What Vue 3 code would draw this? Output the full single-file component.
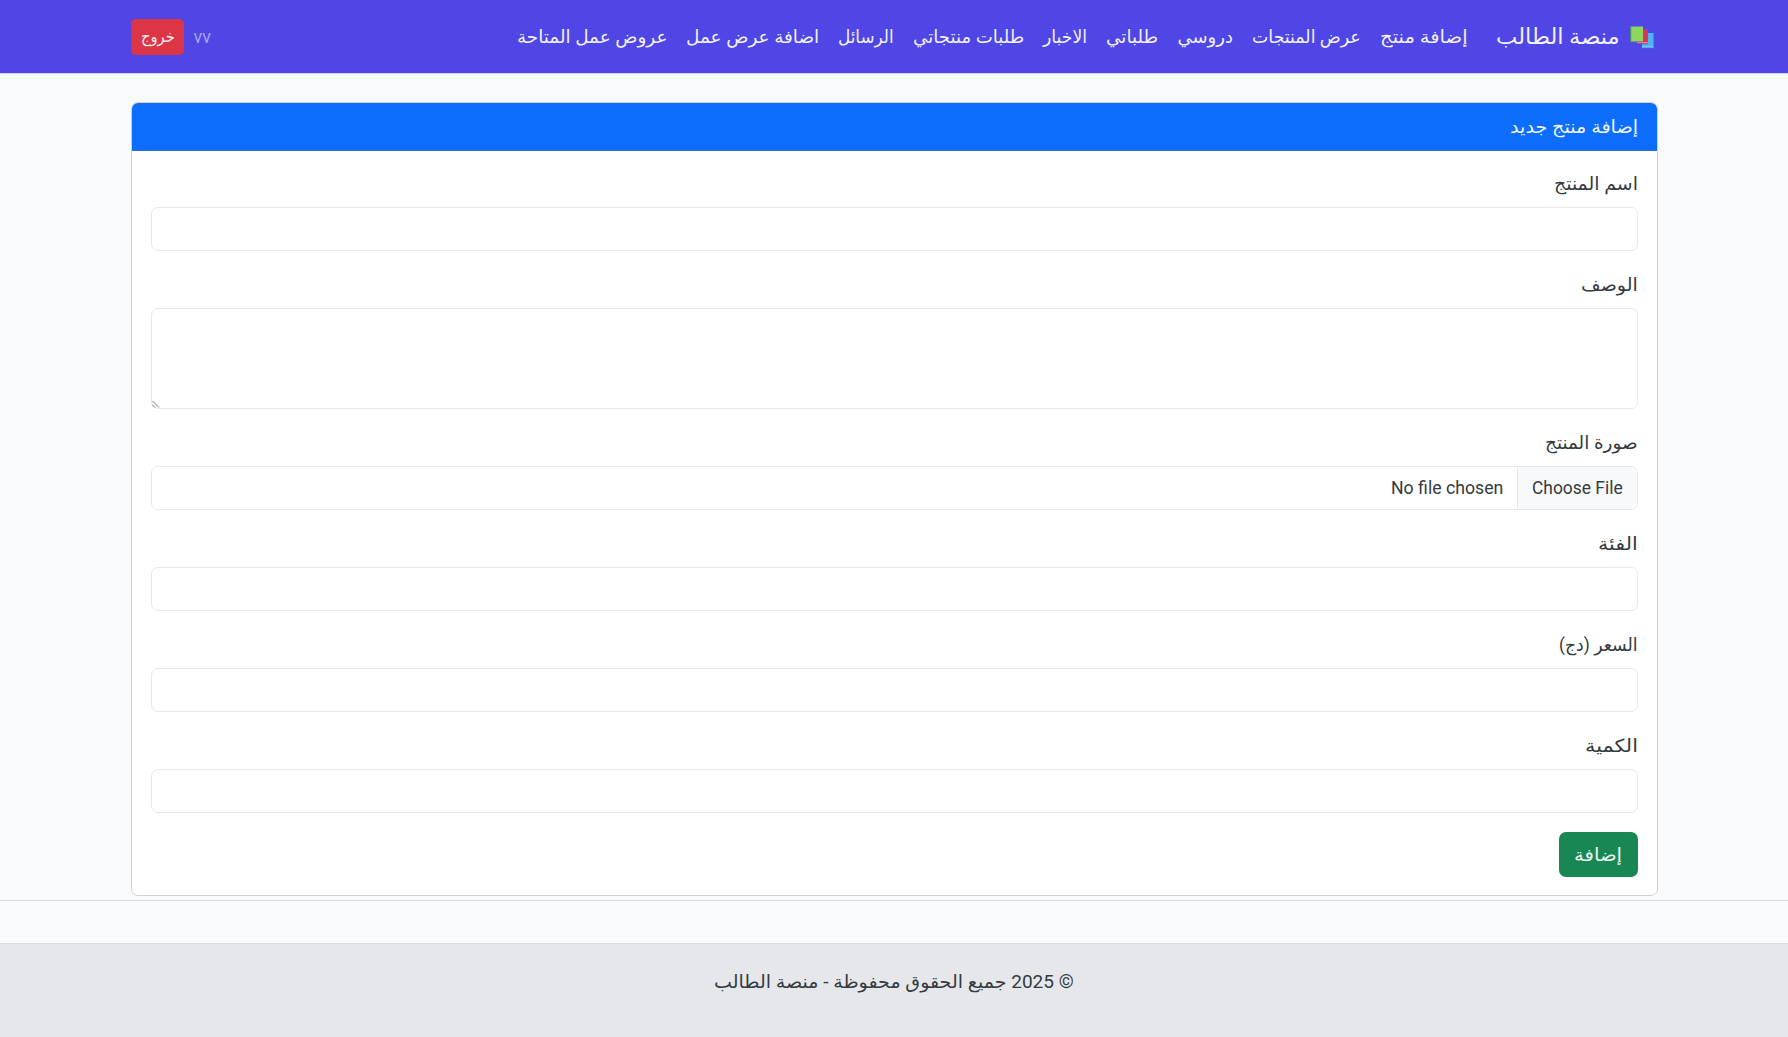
<script setup>
const links = [
  { text: 'إضافة منتج', w: 88 },
  { text: 'عرض المنتجات', w: 109 },
  { text: 'دروسي', w: 56 },
  { text: 'طلباتي', w: 52 },
  { text: 'الاخبار', w: 44 },
  { text: 'طلبات منتجاتي', w: 111 },
  { text: 'الرسائل', w: 56 },
  { text: 'اضافة عرض عمل', w: 133 },
  { text: 'عروض عمل المتاحة', w: 150 },
]

const fields = [
  { label: 'اسم المنتج', w: 84, type: 'text' },
  { label: 'الوصف', w: 57, type: 'textarea' },
  { label: 'صورة المنتج', w: 93, type: 'file' },
  { label: 'الفئة', w: 40, type: 'text' },
  { label: 'السعر (دج)', w: 79, type: 'number' },
  { label: 'الكمية', w: 53, type: 'number' },
]

// Condenses or widens the inner run so that it fills the given width.
const vFit = {
  mounted(el, { value }) {
    const inner = el.firstElementChild
    el.style.width = value + 'px'
    inner.style.transform = `scaleX(${value / inner.offsetWidth})`
  },
}
</script>

<template>
  <div class="page" dir="rtl">
    <nav class="navbar">
      <div class="container bar">
        <a class="brand">
          <svg class="books" width="24" height="23" viewBox="0 0 24 23">
            <path d="M12 7h11.5v13H12z" fill="#4db4ef" />
            <path d="M12 20h11.5v2H12z" fill="#8fb8ef" />
            <path d="M12 21.2h11.5v.9H12z" fill="#3fa9f0" />
            <path d="M7 3.500h11V16H7z" fill="#dc3254" />
            <path d="M7 16h11v1.800H7z" fill="#c98bb5" />
            <path d="M7 17.300h11v.8H7z" fill="#c92f55" />
            <path d="M.8.5H13v13.500H.8z" fill="#8dd65f" />
            <path d="M.8 14H13v1.800H.8z" fill="#b2b8a8" />
            <path d="M.3.5h1v15.800h-1zM.8 15.300H13v1H.8z" fill="#4f9a5c" />
          </svg>
          <span v-fit="124" class="fit"><span>منصة الطالب</span></span>
        </a>
        <div class="links">
          <a v-for="l in links" :key="l.text" v-fit="l.w" class="fit"><span>{{ l.text }}</span></a>
        </div>
        <div class="user">
          <span v-fit="17" class="fit name"><span>vv</span></span>
          <button class="logout"><span v-fit="34" class="fit"><span>خروج</span></span></button>
        </div>
      </div>
    </nav>

    <main class="container">
      <section class="card">
        <header class="card-header">
          <span v-fit="128" class="fit"><span>إضافة منتج جديد</span></span>
        </header>
        <form class="card-body" @submit.prevent>
          <div v-for="f in fields" :key="f.label" class="field">
            <label class="label"><span v-fit="f.w" class="fit"><span>{{ f.label }}</span></span></label>
            <div v-if="f.type === 'textarea'" class="control area">
              <svg class="grip" width="8" height="8" viewBox="0 0 8 8">
                <path d="M.5 1 7 7.500M.5 5 3 7.500" fill="none" stroke="#777" stroke-width="1" />
              </svg>
            </div>
            <div v-else-if="f.type === 'file'" class="control file">
              <span class="choose"><span v-fit="91" class="fit"><span>Choose File</span></span></span>
              <span v-fit="112" class="fit"><span>No file chosen</span></span>
            </div>
            <input v-else class="control" :type="f.type" />
          </div>
          <button class="submit"><span v-fit="48" class="fit"><span>إضافة</span></span></button>
        </form>
      </section>
    </main>

    <div class="rule"></div>

    <footer class="footer">
      <span v-fit="360" class="fit"><span>© 2025 جميع الحقوق محفوظة - منصة الطالب</span></span>
    </footer>
  </div>
</template>

<style>
body {
  background: #f8fafc;
}
</style>

<style scoped>
.page {
  box-sizing: border-box;
  min-height: 1037px;
  display: flex;
  flex-direction: column;
  background: #f8fafc;
  color: #343a40;
  font-family: Roboto, "DejaVu Sans", sans-serif;
  font-size: 18px;
  line-height: 28px;
}
.container {
  box-sizing: border-box;
  width: 1526px;
  margin: 0 auto;
}
.fit {
  display: inline-block;
  text-align: right;
  white-space: nowrap;
}
.fit > span {
  display: inline-block;
  transform-origin: right center;
}
.navbar {
  height: 73px;
  background: #4f46e5;
  border-bottom: 1px solid #d5d4f8;
  color: #f1f0fd;
}
.bar {
  height: 74px;
  display: flex;
  align-items: center;
  padding-right: 3px;
}
.brand {
  display: flex;
  align-items: center;
  gap: 10px;
  font-size: 22px;
  margin-left: 28px;
}
.links {
  display: flex;
  gap: 19px;
}
.user {
  display: flex;
  align-items: center;
  gap: 10px;
  margin-right: auto;
}
.name {
  color: #a7a2f2;
}
.logout {
  width: 53px;
  height: 36px;
  padding: 0;
  border: 0;
  border-radius: 5px;
  background: #dc3545;
  color: #fdebed;
  font: inherit;
  font-size: 16px;
}
.card {
  margin-top: 28px;
  margin-right: -1px;
  box-sizing: border-box;
  height: 794px;
  border: 1px solid #cfd1d4;
  border-radius: 7px;
  background: #fff;
}
.card-header {
  height: 48px;
  box-sizing: border-box;
  padding: 10px 19px 0;
  border-bottom: 1px solid #2b6fd6;
  border-radius: 6px 6px 0 0;
  background: #0d6efd;
  color: #ecf4ff;
}
.card-body {
  padding: 19px 19px 0;
}
.field {
  margin-bottom: 20px;
}
.field:last-of-type {
  margin-bottom: 19px;
}
.label {
  display: block;
  height: 28px;
  margin-bottom: 9px;
}
.control {
  display: block;
  box-sizing: border-box;
  width: 100%;
  height: 44px;
  border: 1px solid #e6e8ea;
  border-radius: 7px;
  background: #fff;
  font: inherit;
  outline: none;
}
.area {
  height: 101px;
  display: flex;
  align-items: flex-end;
  justify-content: flex-end;
}
.file {
  display: flex;
  align-items: center;
  gap: 14px;
  overflow: hidden;
}
.choose {
  box-sizing: border-box;
  height: 42px;
  width: 120px;
  padding: 7px 14px 0;
  background: #f8f9fa;
  border-left: 1px solid #e3e6e8;
}
.submit {
  display: block;
  width: 79px;
  height: 45px;
  padding: 0;
  border: 0;
  border-radius: 7px;
  background: #198754;
  color: #e9f7f0;
  font: inherit;
}
.rule {
  margin-top: 4px;
  height: 1px;
  background: #dcdee1;
}
.footer {
  margin-top: 42px;
  flex: 1;
  border-top: 1px solid #d9dce0;
  background: #e5e7eb;
  padding-top: 24px;
  text-align: center;
}
</style>
